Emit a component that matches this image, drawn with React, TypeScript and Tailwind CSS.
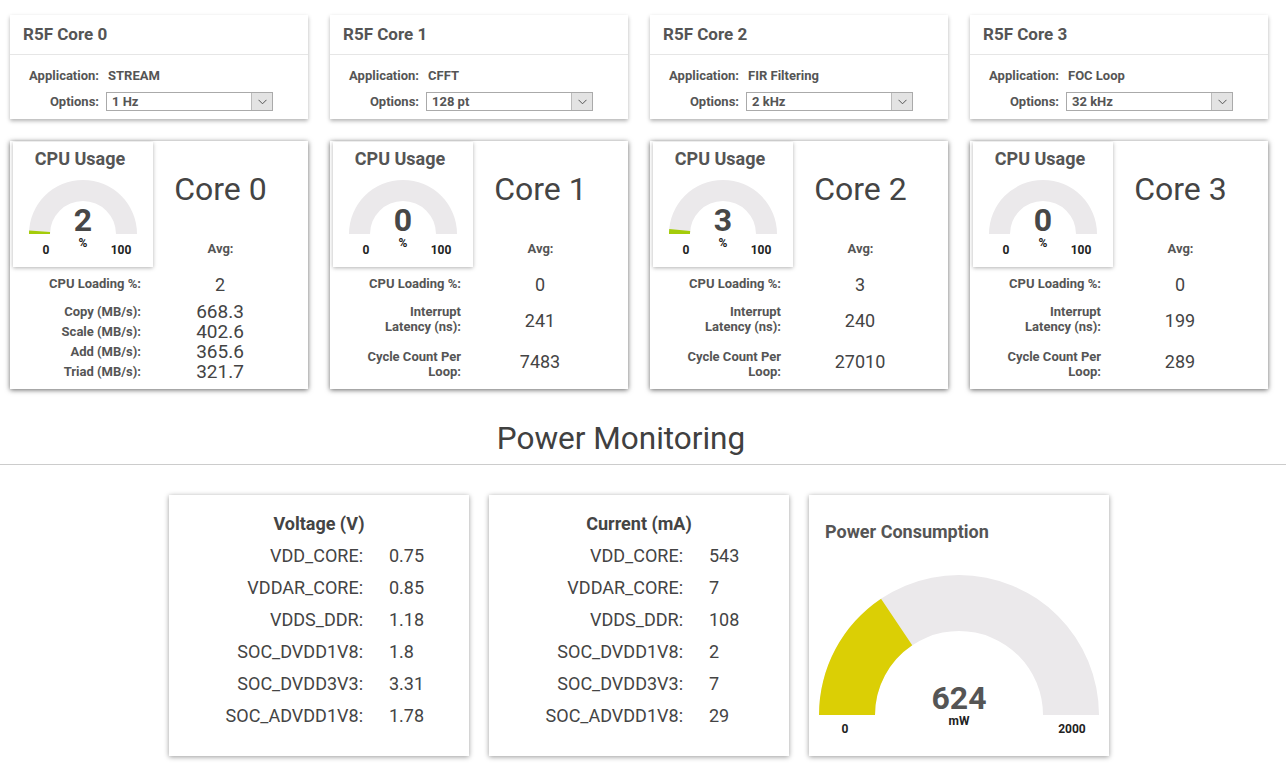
import React from 'react';

type Row = { label: string[]; value: string };

interface Core {
  title: string;
  app: string;
  option: string;
  usage: number;
  name: string;
  loading: string;
  rows: Row[];
  stream?: boolean;
}

const cores: Core[] = [
  {
    title: 'R5F Core 0',
    app: 'STREAM',
    option: '1 Hz',
    usage: 2,
    name: 'Core 0',
    loading: '2',
    stream: true,
    rows: [
      { label: ['Copy (MB/s):'], value: '668.3' },
      { label: ['Scale (MB/s):'], value: '402.6' },
      { label: ['Add (MB/s):'], value: '365.6' },
      { label: ['Triad (MB/s):'], value: '321.7' },
    ],
  },
  {
    title: 'R5F Core 1',
    app: 'CFFT',
    option: '128 pt',
    usage: 0,
    name: 'Core 1',
    loading: '0',
    rows: [
      { label: ['Interrupt', 'Latency (ns):'], value: '241' },
      { label: ['Cycle Count Per', 'Loop:'], value: '7483' },
    ],
  },
  {
    title: 'R5F Core 2',
    app: 'FIR Filtering',
    option: '2 kHz',
    usage: 3,
    name: 'Core 2',
    loading: '3',
    rows: [
      { label: ['Interrupt', 'Latency (ns):'], value: '240' },
      { label: ['Cycle Count Per', 'Loop:'], value: '27010' },
    ],
  },
  {
    title: 'R5F Core 3',
    app: 'FOC Loop',
    option: '32 kHz',
    usage: 0,
    name: 'Core 3',
    loading: '0',
    rows: [
      { label: ['Interrupt', 'Latency (ns):'], value: '199' },
      { label: ['Cycle Count Per', 'Loop:'], value: '289' },
    ],
  },
];

const voltages = [
  ['VDD_CORE:', '0.75'],
  ['VDDAR_CORE:', '0.85'],
  ['VDDS_DDR:', '1.18'],
  ['SOC_DVDD1V8:', '1.8'],
  ['SOC_DVDD3V3:', '3.31'],
  ['SOC_ADVDD1V8:', '1.78'],
];

const currents = [
  ['VDD_CORE:', '543'],
  ['VDDAR_CORE:', '7'],
  ['VDDS_DDR:', '108'],
  ['SOC_DVDD1V8:', '2'],
  ['SOC_DVDD3V3:', '7'],
  ['SOC_ADVDD1V8:', '29'],
];

// donut segment of a half gauge, f0..f1 in 0..1 from the left end
function arc(cx: number, cy: number, R: number, r: number, f0: number, f1: number) {
  const pt = (rad: number, f: number) => {
    const a = Math.PI * (1 - f);
    return `${(cx + rad * Math.cos(a)).toFixed(2)} ${(cy - rad * Math.sin(a)).toFixed(2)}`;
  };
  return `M ${pt(R, f0)} A ${R} ${R} 0 0 1 ${pt(R, f1)} L ${pt(r, f1)} A ${r} ${r} 0 0 0 ${pt(r, f0)} Z`;
}

function CoreSettings({ core }: { core: Core }) {
  return (
    <div className="w-[298px] h-[104px] bg-white shadow-[0_2px_4px_rgba(0,0,0,0.3)]">
      <div className="h-[40px] flex items-center px-[13px] border-b border-[#e6e6e6] text-[17px] font-bold text-[#555]">
        {core.title}
      </div>
      <div className="pt-[12px] text-[13px] font-bold text-[#555]">
        <div className="flex items-center h-[18px]">
          <span className="w-[89px] text-right">Application:</span>
          <span className="ml-[9px]">{core.app}</span>
        </div>
        <div className="flex items-center mt-[7px]">
          <span className="w-[89px] text-right">Options:</span>
          <div className="ml-[7px] w-[167px] h-[19px] flex border border-[#aaa] bg-white">
            <span className="flex-1 pl-[5px] leading-[17px]">{core.option}</span>
            <span className="w-[21px] flex items-center justify-center bg-[#e3e3e3] border-l border-[#bbb]">
              <svg width="9" height="6" viewBox="0 0 9 6">
                <path d="M0.5 0.8 L4.5 4.8 L8.5 0.8" fill="none" stroke="#555" strokeWidth="1" />
              </svg>
            </span>
          </div>
        </div>
      </div>
    </div>
  );
}

function SmallGauge({ value }: { value: number }) {
  return (
    <div className="w-[140px] h-[125px] ml-[3px] mt-[1px] bg-white shadow-[0_1px_4px_rgba(0,0,0,0.3)] pt-[6px]">
      <div className="text-center text-[18px] font-bold leading-[22px] text-[#555] pr-[6px]">CPU Usage</div>
      <svg width="140" height="97" className="block">
        <path d={arc(70, 64, 54, 33, 0, 1)} fill="#ebe9eb" />
        {value > 0 && <path d={arc(70, 64, 54, 33, 0, value / 100)} fill="#a4cc0a" />}
        <text x="70" y="61" textAnchor="middle" fontSize="32" fontWeight="700" fill="#474747">
          {value}
        </text>
        <text x="70" y="77" textAnchor="middle" fontSize="12" fontWeight="700" fill="#222">%</text>
        <text x="33" y="84" textAnchor="middle" fontSize="12" fontWeight="700" fill="#222">0</text>
        <text x="108" y="84" textAnchor="middle" fontSize="12" fontWeight="700" fill="#222">100</text>
      </svg>
    </div>
  );
}

function CoreStats({ core }: { core: Core }) {
  return (
    <div className="w-[298px] h-[248px] bg-white shadow-[0_1px_5px_rgba(0,0,0,0.6)]">
      <div className="flex">
        <SmallGauge value={core.usage} />
        <div className="w-[135px] text-center">
          <div className="mt-[30px] text-[32px] leading-[36px] text-[#444]">{core.name}</div>
          <div className="mt-[32px] text-[13px] font-bold text-[#555]">Avg:</div>
        </div>
      </div>
      <div className="flex items-center h-[20px] mt-[7px]">
        <span className="w-[131px] text-right text-[13px] font-bold text-[#555]">CPU Loading %:</span>
        <span className="w-[158px] text-center text-[18px] text-[#444]">{core.loading}</span>
      </div>
      {core.stream ? (
        <div className="mt-[8px]">
          {core.rows.map((r) => (
            <div key={r.label[0]} className="flex items-center h-[20px]">
              <span className="w-[131px] text-right text-[13px] font-bold text-[#555]">{r.label[0]}</span>
              <span className="w-[158px] text-center text-[19px] text-[#444]">{r.value}</span>
            </div>
          ))}
        </div>
      ) : (
        <div className="mt-[10px] flex flex-col gap-[15px]">
          {core.rows.map((r, i) => (
            <div key={r.label[0]} className="flex items-start h-[30px]">
              <span className="w-[131px] text-right text-[13px] font-bold leading-[15px] text-[#555]">
                {r.label.map((l) => (
                  <span key={l} className="block">{l}</span>
                ))}
              </span>
              <span
                className={
                  i === 0
                    ? 'w-[158px] text-center text-[18px] leading-[21px] text-[#444] mt-[6px]'
                    : 'w-[158px] text-center text-[18px] leading-[21px] text-[#444] mt-[2px]'
                }
              >
                {r.value}
              </span>
            </div>
          ))}
        </div>
      )}
    </div>
  );
}

function ReadingCard({ title, rows }: { title: string; rows: string[][] }) {
  return (
    <div className="w-[300px] h-[261px] bg-white shadow-[0_1px_5px_rgba(0,0,0,0.4)] pt-[17px]">
      <div className="text-center text-[18px] font-bold leading-[24px] text-[#444]">{title}</div>
      <div className="mt-[3px]">
        {rows.map(([k, v]) => (
          <div key={k} className="flex h-[32px] items-center text-[18px] text-[#444]">
            <span className="w-[194px] text-right">{k}</span>
            <span className="ml-[26px]">{v}</span>
          </div>
        ))}
      </div>
    </div>
  );
}

function PowerCard({ value, max }: { value: number; max: number }) {
  return (
    <div className="w-[300px] h-[261px] bg-white shadow-[0_1px_5px_rgba(0,0,0,0.4)] pt-[26px]">
      <div className="pl-[16px] text-[18px] font-bold leading-[22px] text-[#555]">Power Consumption</div>
      <svg width="300" height="213" className="block">
        <path d={arc(150, 172, 140, 84, 0, 1)} fill="#ebe9eb" />
        <path d={arc(150, 172, 140, 84, 0, value / max)} fill="#dbcf05" />
        <text x="150" y="166" textAnchor="middle" fontSize="32" fontWeight="700" fill="#555">
          {value}
        </text>
        <text x="150" y="182" textAnchor="middle" fontSize="12" fontWeight="700" fill="#222">mW</text>
        <text x="36" y="190" textAnchor="middle" fontSize="12" fontWeight="700" fill="#222">0</text>
        <text x="263" y="190" textAnchor="middle" fontSize="12" fontWeight="700" fill="#222">{max}</text>
      </svg>
    </div>
  );
}

export default function App() {
  return (
    <div className="min-h-screen bg-white font-['Roboto',sans-serif] text-[#444]">
      <div className="pl-[10px] pt-[15px]">
        <div className="flex gap-[22px]">
          {cores.map((c) => (
            <CoreSettings key={c.title} core={c} />
          ))}
        </div>
        <div className="flex gap-[22px] mt-[22px]">
          {cores.map((c) => (
            <CoreStats key={c.title} core={c} />
          ))}
        </div>
      </div>

      <h2 className="w-[1242px] mt-[30px] text-center text-[31.5px] leading-[40px] text-[#404040]">Power Monitoring</h2>
      <div className="mt-[5px] h-px bg-[#cccccc]" />

      <div className="mt-[30px] pl-[169px] flex gap-[20px]">
        <ReadingCard title="Voltage (V)" rows={voltages} />
        <ReadingCard title="Current (mA)" rows={currents} />
        <PowerCard value={624} max={2000} />
      </div>
    </div>
  );
}
